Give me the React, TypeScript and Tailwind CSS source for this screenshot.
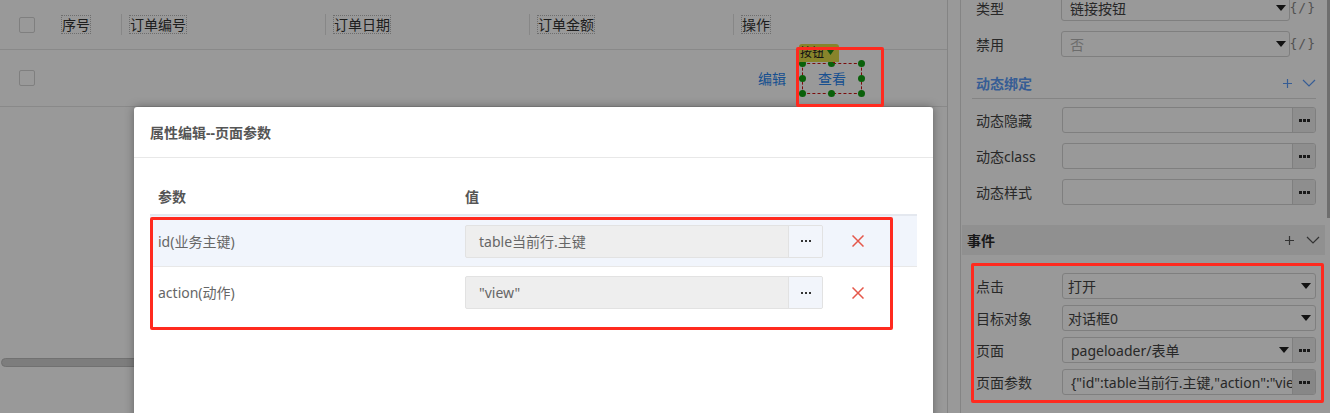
import React from "react";

function Checkbox() {
  return <div className="w-[16px] h-[16px] rounded-[2px] border border-[#d4d4d4] bg-white" />;
}

function Tri() {
  return (
    <span className="inline-block w-0 h-0 border-l-[5px] border-r-[5px] border-t-[6px] border-l-transparent border-r-transparent border-t-[#1e1e1e]" />
  );
}

function PanelDots() {
  return (
    <span className="flex gap-[1px]">
      <span className="w-[3px] h-[3px] bg-[#2a2a2a]" />
      <span className="w-[3px] h-[3px] bg-[#2a2a2a]" />
      <span className="w-[3px] h-[3px] bg-[#2a2a2a]" />
    </span>
  );
}

function DialogDots() {
  return (
    <span className="flex gap-[2px]">
      <span className="w-[2px] h-[2px] bg-[#333]" />
      <span className="w-[2px] h-[2px] bg-[#333]" />
      <span className="w-[2px] h-[2px] bg-[#333]" />
    </span>
  );
}

function Plus({ color }: { color: string }) {
  return (
    <svg width="9" height="9" viewBox="0 0 9 9">
      <path d="M4.5 0v9M0 4.5h9" stroke={color} strokeWidth="1.2" />
    </svg>
  );
}

function Chevron({ color }: { color: string }) {
  return (
    <svg width="14" height="8" viewBox="0 0 14 8">
      <polyline points="1,1 7,7 13,1" fill="none" stroke={color} strokeWidth="1.2" />
    </svg>
  );
}

function HeadCol({ text, wide }: { text: string; wide?: boolean }) {
  return (
    <div className={wide ? "flex-1 flex items-center" : "w-[204px] flex items-center"}>
      <span className="w-px h-[21px] bg-[#e2e2e2]" />
      <span className="ml-[7px] border border-dotted border-[#b8b8b8] leading-[17px]">{text}</span>
    </div>
  );
}

function CodeSelect({ label, value, disabled }: { label: string; value: string; disabled?: boolean }) {
  return (
    <div className="h-[26px] flex items-center">
      <div className="w-[86px] text-[#444]">{label}</div>
      <div className="w-[231px] h-[26px] border border-[#d4d4d4] rounded-[3px] flex items-center pl-[8px] pr-[3px]">
        <span className={disabled ? "flex-1 text-[#b5b5b5]" : "flex-1 text-[#444]"}>{value}</span>
        <Tri />
      </div>
      <div className="flex-1 text-right text-[13px] text-[#888] tracking-[1px] font-['DejaVu_Sans_Mono',monospace]">{"{/}"}</div>
    </div>
  );
}

function MoreInput({ label, value, btnBg }: { label: string; value?: string; btnBg?: string }) {
  return (
    <div className="h-[26px] flex items-center">
      <div className="w-[86px] text-[#444]">{label}</div>
      <div className="flex-1 h-[26px] border border-[#d4d4d4] rounded-[3px] flex overflow-hidden">
        <div className="flex-1 min-w-0 pl-[8px] flex items-center whitespace-nowrap overflow-hidden text-[#444]">{value}</div>
        <div className={"w-[23px] border-l border-[#d4d4d4] flex items-center justify-center " + (btnBg ?? "bg-[#ededed]")}>
          <PanelDots />
        </div>
      </div>
    </div>
  );
}

function EventSelect({ label, value }: { label: string; value: string }) {
  return (
    <div className="h-[26px] flex items-center">
      <div className="w-[86px] text-[#444]">{label}</div>
      <div className="flex-1 h-[26px] border border-[#d4d4d4] rounded-[3px] flex items-center pl-[5px] pr-[4px]">
        <span className="flex-1 text-[#444]">{value}</span>
        <Tri />
      </div>
    </div>
  );
}

function ParamRow({ name, value, hover, last }: { name: string; value: string; hover?: boolean; last?: boolean }) {
  return (
    <div
      className={
        "h-[51px] flex items-center " +
        (last ? "" : "border-b border-[#e8e8e8] ") +
        (hover ? "bg-[#f1f5fc]" : "bg-white")
      }
    >
      <div className="w-[307px] pl-[8px] text-[#666]">{name}</div>
      <div className="w-[374px] pl-[8px]">
        <div className="w-[358px] h-[33px] flex border border-[#e2e2e2] rounded-[2px] bg-[#eeeeee] overflow-hidden">
          <div className="flex-1 pl-[13px] flex items-center text-[#666]">{value}</div>
          <div className="w-[34px] border-l border-[#e2e2e2] bg-[#f2f5fb] flex items-center justify-center">
            <DialogDots />
          </div>
        </div>
      </div>
      <div className="pl-[21px] flex items-center">
        <svg width="12" height="12" viewBox="0 0 12 12">
          <path d="M0.5 0.5L11.5 11.5M11.5 0.5L0.5 11.5" stroke="#e5574a" strokeWidth="1.5" />
        </svg>
      </div>
    </div>
  );
}

export default function App() {
  return (
    <div className="relative w-[1330px] h-[413px] overflow-hidden bg-white text-[14px] font-['Noto_Sans','Noto_Sans_CJK_SC',sans-serif]">
      <div className="flex h-full">
        {/* left canvas */}
        <div className="w-[947px] bg-white flex flex-col">
          <div className="h-[50px] border-b border-[#e4e4e4] flex items-center text-[#333]">
            <div className="w-[54px] pl-[19px]">
              <Checkbox />
            </div>
            <div className="w-[67px] pl-[7px] flex items-center">
              <span className="border border-dotted border-[#b8b8b8] leading-[17px]">序号</span>
            </div>
            <HeadCol text="订单编号" />
            <HeadCol text="订单日期" />
            <HeadCol text="订单金额" />
            <HeadCol text="操作" wide />
          </div>
          <div className="h-[57px] border-b border-[#e4e4e4] flex items-center">
            <div className="w-[54px] pl-[19px]">
              <Checkbox />
            </div>
            <div className="w-[679px]" />
            <div className="flex-1 pl-[25px] flex items-center">
              <span className="text-[#2a86f0]">编辑</span>
              <div className="relative ml-[16px] w-[60px] h-[31px] border border-dashed border-[#cc1414] flex items-center justify-center">
                <span className="text-[#2a86f0]">查看</span>
                <span className="absolute -left-[4px] -top-[4px] w-[7px] h-[7px] rounded-full bg-[#12a012]" />
                <span className="absolute left-[25px] -top-[4px] w-[7px] h-[7px] rounded-full bg-[#12a012]" />
                <span className="absolute -right-[4px] -top-[4px] w-[7px] h-[7px] rounded-full bg-[#12a012]" />
                <span className="absolute -left-[4px] top-[11px] w-[7px] h-[7px] rounded-full bg-[#12a012]" />
                <span className="absolute -right-[4px] top-[11px] w-[7px] h-[7px] rounded-full bg-[#12a012]" />
                <span className="absolute -left-[4px] -bottom-[4px] w-[7px] h-[7px] rounded-full bg-[#12a012]" />
                <span className="absolute left-[25px] -bottom-[4px] w-[7px] h-[7px] rounded-full bg-[#12a012]" />
                <span className="absolute -right-[4px] -bottom-[4px] w-[7px] h-[7px] rounded-full bg-[#12a012]" />
                <span className="absolute left-[30px] -top-[14px] w-[2px] h-[13px] bg-[#d01010]" />
                <div className="absolute -left-[4px] -top-[20px] w-[40px] h-[18px] rounded-t-[3px] bg-[#e2dd48] flex items-center pl-[1px] text-[12px] text-[#222] leading-none">
                  <span>按钮</span>
                  <svg className="ml-[3px]" width="7" height="5" viewBox="0 0 7 5">
                    <path d="M0 0h7L3.5 5z" fill="#1a8a1a" />
                  </svg>
                </div>
              </div>
            </div>
          </div>
          <div className="mt-[251px] ml-[1px] w-[700px] h-[9px] rounded-full bg-[#d0d0d0] border border-[#bcbcbc]" />
        </div>

        {/* strip */}
        <div className="w-[14px] bg-white border-l border-r border-[#dcdcdc]" />

        {/* right panel */}
        <div className="relative w-[369px] bg-white">
          <div className="-mt-[5px] pl-[15px] pr-[14px] flex flex-col">
            <CodeSelect label="类型" value="链接按钮" />
            <div className="mt-[10px]">
              <CodeSelect label="禁用" value="否" disabled />
            </div>
            <div className="mt-[11px] -ml-[4px] pl-[4px] h-[31px] border-b border-[#dcdcdc] flex items-center">
              <span className="flex-1 font-bold text-[#5b9bf8]">动态绑定</span>
              <Plus color="#5b9bf8" />
              <span className="ml-[10px]">
                <Chevron color="#5b9bf8" />
              </span>
            </div>
            <div className="mt-[8px]">
              <MoreInput label="动态隐藏" />
            </div>
            <div className="mt-[10px]">
              <MoreInput label="动态class" />
            </div>
            <div className="mt-[10px]">
              <MoreInput label="动态样式" />
            </div>
          </div>
          <div className="mt-[20px] ml-[1px] mr-[5px] h-[30px] bg-[#f0f0f0] flex items-center pl-[5px] pr-[5px]">
            <span className="flex-1 font-bold text-[#2a2a2a]">事件</span>
            <Plus color="#555" />
            <span className="ml-[12px]">
              <Chevron color="#555" />
            </span>
          </div>
          <div className="mt-[18px] pl-[15px] pr-[14px] flex flex-col gap-[6px]">
            <EventSelect label="点击" value="打开" />
            <EventSelect label="目标对象" value="对话框0" />
            <div className="h-[26px] flex items-center">
              <div className="w-[86px] text-[#444]">页面</div>
              <div className="flex-1 h-[26px] border border-[#d4d4d4] rounded-[3px] flex overflow-hidden">
                <div className="flex-1 pl-[8px] pr-[3px] flex items-center text-[#444]">
                  <span className="flex-1">pageloader/表单</span>
                  <Tri />
                </div>
                <div className="w-[23px] border-l border-[#d4d4d4] bg-[#ededed] flex items-center justify-center">
                  <PanelDots />
                </div>
              </div>
            </div>
            <MoreInput label="页面参数" value={'{"id":table当前行.主键,"action":"view"}'} btnBg="bg-[#e2e2e2]" />
          </div>
          <div className="absolute right-0 top-0 w-[3px] h-[218px] bg-[#b8b8b8]" />
        </div>
      </div>

      {/* modal backdrop */}
      <div className="absolute inset-0 bg-black/40" />

      {/* dialog */}
      <div className="absolute left-[134px] top-[107px] w-[799px] h-[330px] bg-white rounded-[3px] shadow-[0_0_10px_rgba(0,0,0,0.35)]">
        <div className="h-[51px] border-b border-[#e8e8e8] flex items-center pl-[16px] font-bold text-[#555]">
          属性编辑--页面参数
        </div>
        <div className="px-[16px] pt-[20px]">
          <div className="h-[38px] border-b-2 border-[#e4e8ef] flex items-center font-bold text-[#555]">
            <div className="w-[307px] pl-[8px]">参数</div>
            <div className="pl-[8px]">值</div>
          </div>
          <ParamRow name="id(业务主键)" value="table当前行.主键" hover />
          <ParamRow name="action(动作)" value={'"view"'} last />
        </div>
      </div>

      {/* annotations */}
      <div className="absolute left-[796px] top-[47px] w-[88px] h-[60px] border-[3px] border-[#ff2a1f] rounded-[2px]" />
      <div className="absolute left-[150px] top-[217px] w-[743px] h-[113px] border-[3px] border-[#ff2a1f] rounded-[2px]" />
      <div className="absolute left-[971px] top-[263px] w-[353px] h-[140px] border-[3px] border-[#ff2a1f] rounded-[2px]" />
    </div>
  );
}
